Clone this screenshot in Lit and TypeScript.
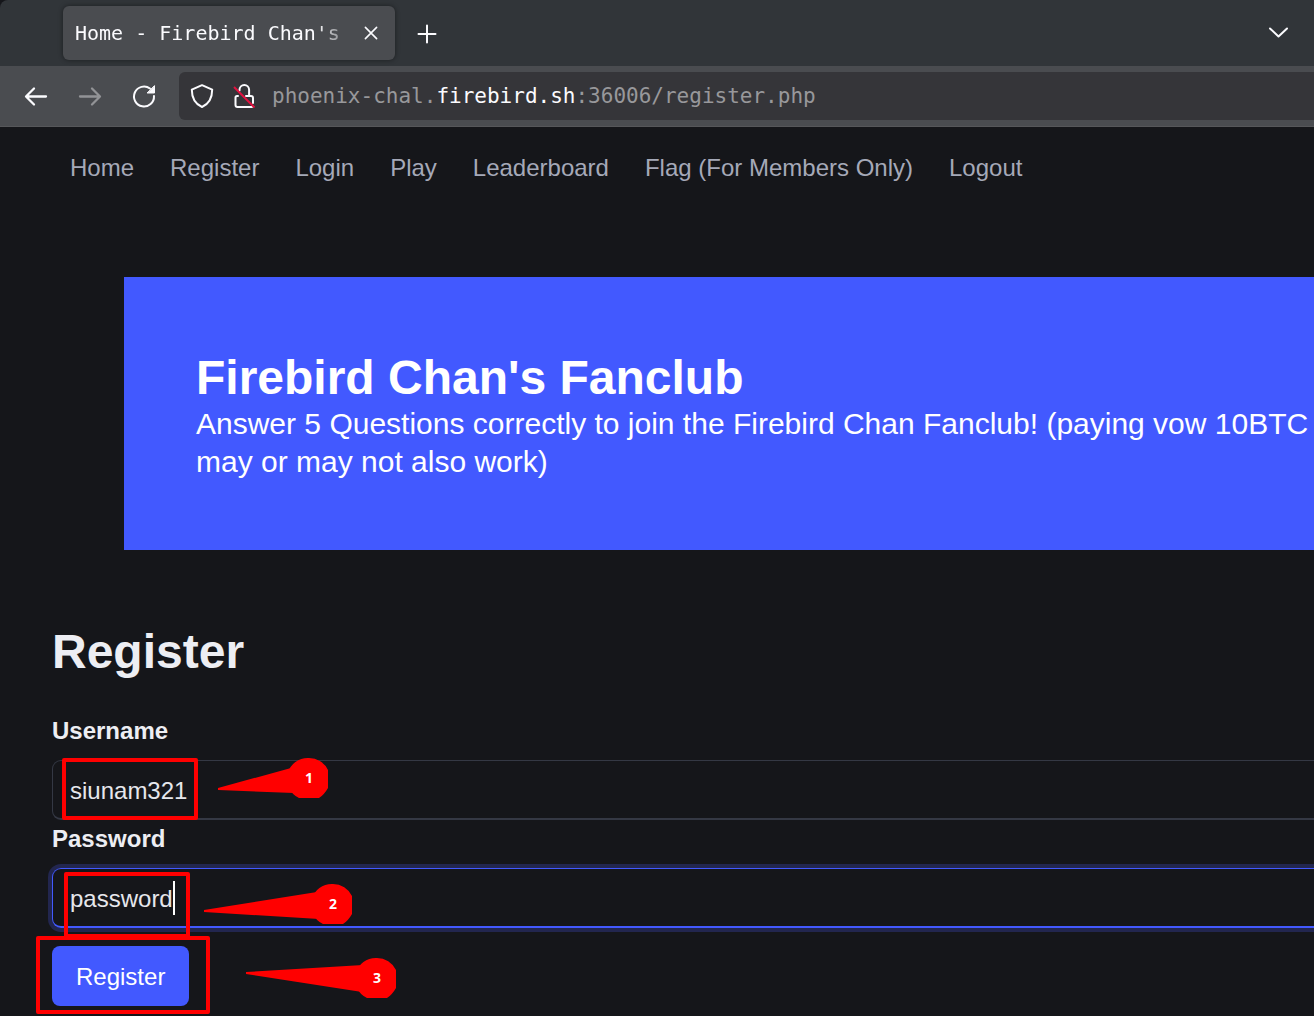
import { LitElement, html, svg, css } from "lit";
import { customElement, state } from "lit/decorators.js";

interface Callout {
  label: string;
  cx: number;
  cy: number;
  pointer: string;
}

@customElement("browser-chrome")
class BrowserChrome extends LitElement {
  static styles = css`
    :host {
      display: block;
      color: #fbfbfe;
      font-family: "DejaVu Sans Mono", "Liberation Mono", monospace;
      background: #15161a;
    }
    button {
      display: flex;
      align-items: center;
      justify-content: center;
      padding: 0;
      border: 0;
      background: none;
      color: inherit;
    }
    svg {
      display: block;
      fill: none;
      stroke: currentColor;
      stroke-width: 2;
      stroke-linecap: round;
      stroke-linejoin: round;
    }
    .tabs {
      display: flex;
      align-items: center;
      height: 66px;
      padding: 0 21px 0 63px;
      background: #313539;
      border-top-left-radius: 8px;
      box-sizing: border-box;
    }
    .tab {
      display: flex;
      align-items: center;
      justify-content: space-between;
      width: 332px;
      height: 54px;
      padding: 0 12px;
      box-sizing: border-box;
      border-radius: 6px;
      background: #4a4c50;
      box-shadow: 0 0 5px rgba(0, 0, 0, 0.45);
    }
    .title {
      white-space: nowrap;
      font-size: 20px;
      line-height: 28px;
      -webkit-mask-image: linear-gradient(to left, rgba(0, 0, 0, 0.4), #000 24px);
      mask-image: linear-gradient(to left, rgba(0, 0, 0, 0.4), #000 24px);
    }
    .close {
      width: 24px;
      height: 24px;
    }
    .add {
      width: 32px;
      height: 32px;
      margin-left: 16px;
    }
    .list {
      width: 30px;
      height: 30px;
      margin-left: auto;
    }
    .toolbar {
      display: flex;
      align-items: center;
      height: 61px;
      padding: 6px 0 6px 18px;
      box-sizing: border-box;
      background: #4a4c50;
      border-bottom: 1px solid #56575a;
    }
    .tools {
      display: flex;
      gap: 18px;
      margin-right: 17px;
    }
    .tool {
      width: 36px;
      height: 36px;
    }
    .tool[disabled] {
      color: #929396;
    }
    .address {
      flex: 1;
      display: flex;
      align-items: center;
      height: 48px;
      min-width: 0;
      padding-left: 9px;
      border-radius: 6px 0 0 6px;
      background: #353539;
    }
    .site {
      width: 28px;
      height: 28px;
      margin-right: 14px;
    }
    .url {
      font-size: 21px;
      line-height: 28px;
      color: #98989b;
      white-space: nowrap;
    }
    .domain {
      color: #fbfbfe;
    }
  `;

  render() {
    return html`
      <div class="tabs">
        <div class="tab">
          <span class="title">Home - Firebird Chan's</span>
          <button class="close" aria-label="Close tab">
            <svg width="24" height="24" viewBox="0 0 24 24"><path d="M6.4 6.4 17.6 17.6M17.6 6.4 6.4 17.6" stroke-width="1.6" /></svg>
          </button>
        </div>
        <button class="add" aria-label="New tab">
          <svg width="32" height="32" viewBox="0 0 32 32"><path d="M16 8.500v17M7.500 17h17" /></svg>
        </button>
        <button class="list" aria-label="List all tabs">
          <svg width="30" height="30" viewBox="0 0 30 30"><path d="M7 10.500l8.500 8 8.500-8" /></svg>
        </button>
      </div>
      <div class="toolbar">
        <div class="tools">
          <button class="tool" aria-label="Back">
            <svg width="36" height="36" viewBox="0 0 36 36"><path d="M28 18.500H8.500M16 10.500l-8 8 8 8" stroke-width="2.300" /></svg>
          </button>
          <button class="tool" aria-label="Forward" disabled>
            <svg width="36" height="36" viewBox="0 0 36 36"><path d="M8 18.500h19.500M20 10.500l8 8-8 8" stroke-width="2.300" /></svg>
          </button>
          <button class="tool" aria-label="Reload">
            <svg width="36" height="36" viewBox="0 0 36 36">
              <path d="M28 18a10 10 0 1 1-4-7.500" />
              <path d="M28.500 8v7h-7z" fill="currentColor" stroke-width="1" />
            </svg>
          </button>
        </div>
        <div class="address">
          <button class="site" aria-label="Tracking protection">
            <svg width="28" height="28" viewBox="0 0 28 28">
              <path d="M14 3.200 24.200 7.600C24.200 16 21 22 14 25 7 22 3.800 16 3.800 7.600Z" />
            </svg>
          </button>
          <button class="site" aria-label="Connection not secure">
            <svg width="28" height="28" viewBox="0 0 28 28">
              <path d="M9.500 8.500V7.800a4.800 4.800 0 0 1 9.600 0V13.500M16 14h5a2 2 0 0 1 2 2v5M8 14H7a1.500 1.500 0 0 0-1.500 1.500V23a2 2 0 0 0 2 2H22" />
              <path d="M4 5 24.500 25.500" stroke="#e3113f" stroke-linecap="butt" />
            </svg>
          </button>
          <span class="url">phoenix-chal.<span class="domain">firebird.sh</span>:36006/register.php</span>
        </div>
      </div>
    `;
  }
}

@customElement("app-root")
class AppRoot extends LitElement {
  static styles = css`
    :host {
      display: block;
      position: relative;
      overflow: hidden;
      min-height: 100vh;
      background: #15161a;
      color: #edeef3;
      font-family: "Liberation Sans", Arial, sans-serif;
      font-size: 24px;
      line-height: 36px;
    }
    .nav {
      display: flex;
      gap: 36px;
      padding: 23px 70px;
      white-space: nowrap;
    }
    .nav a {
      color: #a5a9b8;
      text-decoration: none;
    }
    .hero {
      margin: 68px 0 0 124px;
      padding: 73px 0 69px 72px;
      background: #4259ff;
      color: #fff;
    }
    .hero h1 {
      margin: 0;
      font-size: 48px;
      line-height: 55px;
    }
    .hero p {
      margin: 0;
      font-size: 30px;
      line-height: 38px;
    }
    .form {
      display: flex;
      flex-direction: column;
      padding: 72px 0 8px 52px;
    }
    .form h2 {
      margin: 0 0 35px;
      font-size: 48px;
      line-height: 60px;
    }
    .form label {
      font-weight: bold;
      line-height: 28px;
    }
    .field {
      height: 60px;
      margin: 15px 0 5px;
      padding: 2px 17px 0;
      box-sizing: border-box;
      border: 1px solid #343844;
      border-bottom-width: 2px;
      border-right: 0;
      border-radius: 9px 0 0 9px;
      background: transparent;
      color: #e6e7ec;
      font: inherit;
      outline: none;
    }
    .active {
      border-color: #4259ff;
      box-shadow: 0 0 0 4px #22264f;
      margin-bottom: 18px;
    }
    .submit {
      align-self: flex-start;
      height: 60px;
      padding: 2px 24px 0;
      border: 0;
      border-radius: 8px;
      background: #4259ff;
      color: #fff;
      font: inherit;
    }
    .marks {
      position: absolute;
      left: 0;
      top: 0;
      width: 100%;
      height: 100%;
      pointer-events: none;
    }
    .box {
      fill: none;
      stroke: #f00;
      stroke-width: 4;
      stroke-linejoin: round;
    }
    .shape {
      fill: #f00;
    }
    .caret {
      fill: #fff;
    }
    .num {
      fill: #fff;
      font: bold 14px "Open Sans", "Noto Sans", sans-serif;
      text-anchor: middle;
    }
  `;

  @state() private links = [
    "Home",
    "Register",
    "Login",
    "Play",
    "Leaderboard",
    "Flag (For Members Only)",
    "Logout",
  ];

  private callouts: Callout[] = [
    { label: "1", cx: 309, cy: 778, pointer: "218,788 291,768 309,778 294,793 218,790" },
    { label: "2", cx: 333, cy: 904, pointer: "204,910 317,892 333,904 319,919 204,912" },
    { label: "3", cx: 377, cy: 978, pointer: "246,972 363,965 377,978 362,992 246,974" },
  ];

  private renderCallout(c: Callout) {
    const { cx, cy } = c;
    return svg`
      <g>
        <polygon class="shape" points=${c.pointer} />
        <path
          class="shape"
          d=${`M${cx - 10} ${cy + 20}A21 21 0 0 1 ${cx} ${cy - 20}A21 21 0 0 1 ${cx + 19} ${cy - 8}V${cy + 10}Q${cx + 15} ${cy + 17} ${cx + 10} ${cy + 20}Z`}
        />
        <text class="num" x=${cx} y=${cy + 5}>${c.label}</text>
      </g>
    `;
  }

  render() {
    return html`
      <browser-chrome></browser-chrome>
      <nav class="nav">${this.links.map((l) => html`<a href="#">${l}</a>`)}</nav>
      <header class="hero">
        <h1>Firebird Chan's Fanclub</h1>
        <p>
          Answer 5 Questions correctly to join the Firebird Chan Fanclub! (paying vow 10BTC may or
          may not also work)
        </p>
      </header>
      <form class="form" @submit=${(e: Event) => e.preventDefault()}>
        <h2>Register</h2>
        <label for="username">Username</label>
        <input class="field" id="username" type="text" .value=${"siunam321"} />
        <label for="password">Password</label>
        <input class="field active" id="password" type="text" .value=${"password"} />
        <button class="submit">Register</button>
      </form>
      <svg class="marks" aria-hidden="true">
        <rect class="caret" x="173" y="881" width="2" height="34" />
        <rect class="box" x="64" y="760" width="132" height="58" />
        <rect class="box" x="66" y="874" width="122" height="62" />
        <rect class="box" x="38" y="938" width="170" height="74" />
        ${this.callouts.map((c) => this.renderCallout(c))}
      </svg>
    `;
  }
}
